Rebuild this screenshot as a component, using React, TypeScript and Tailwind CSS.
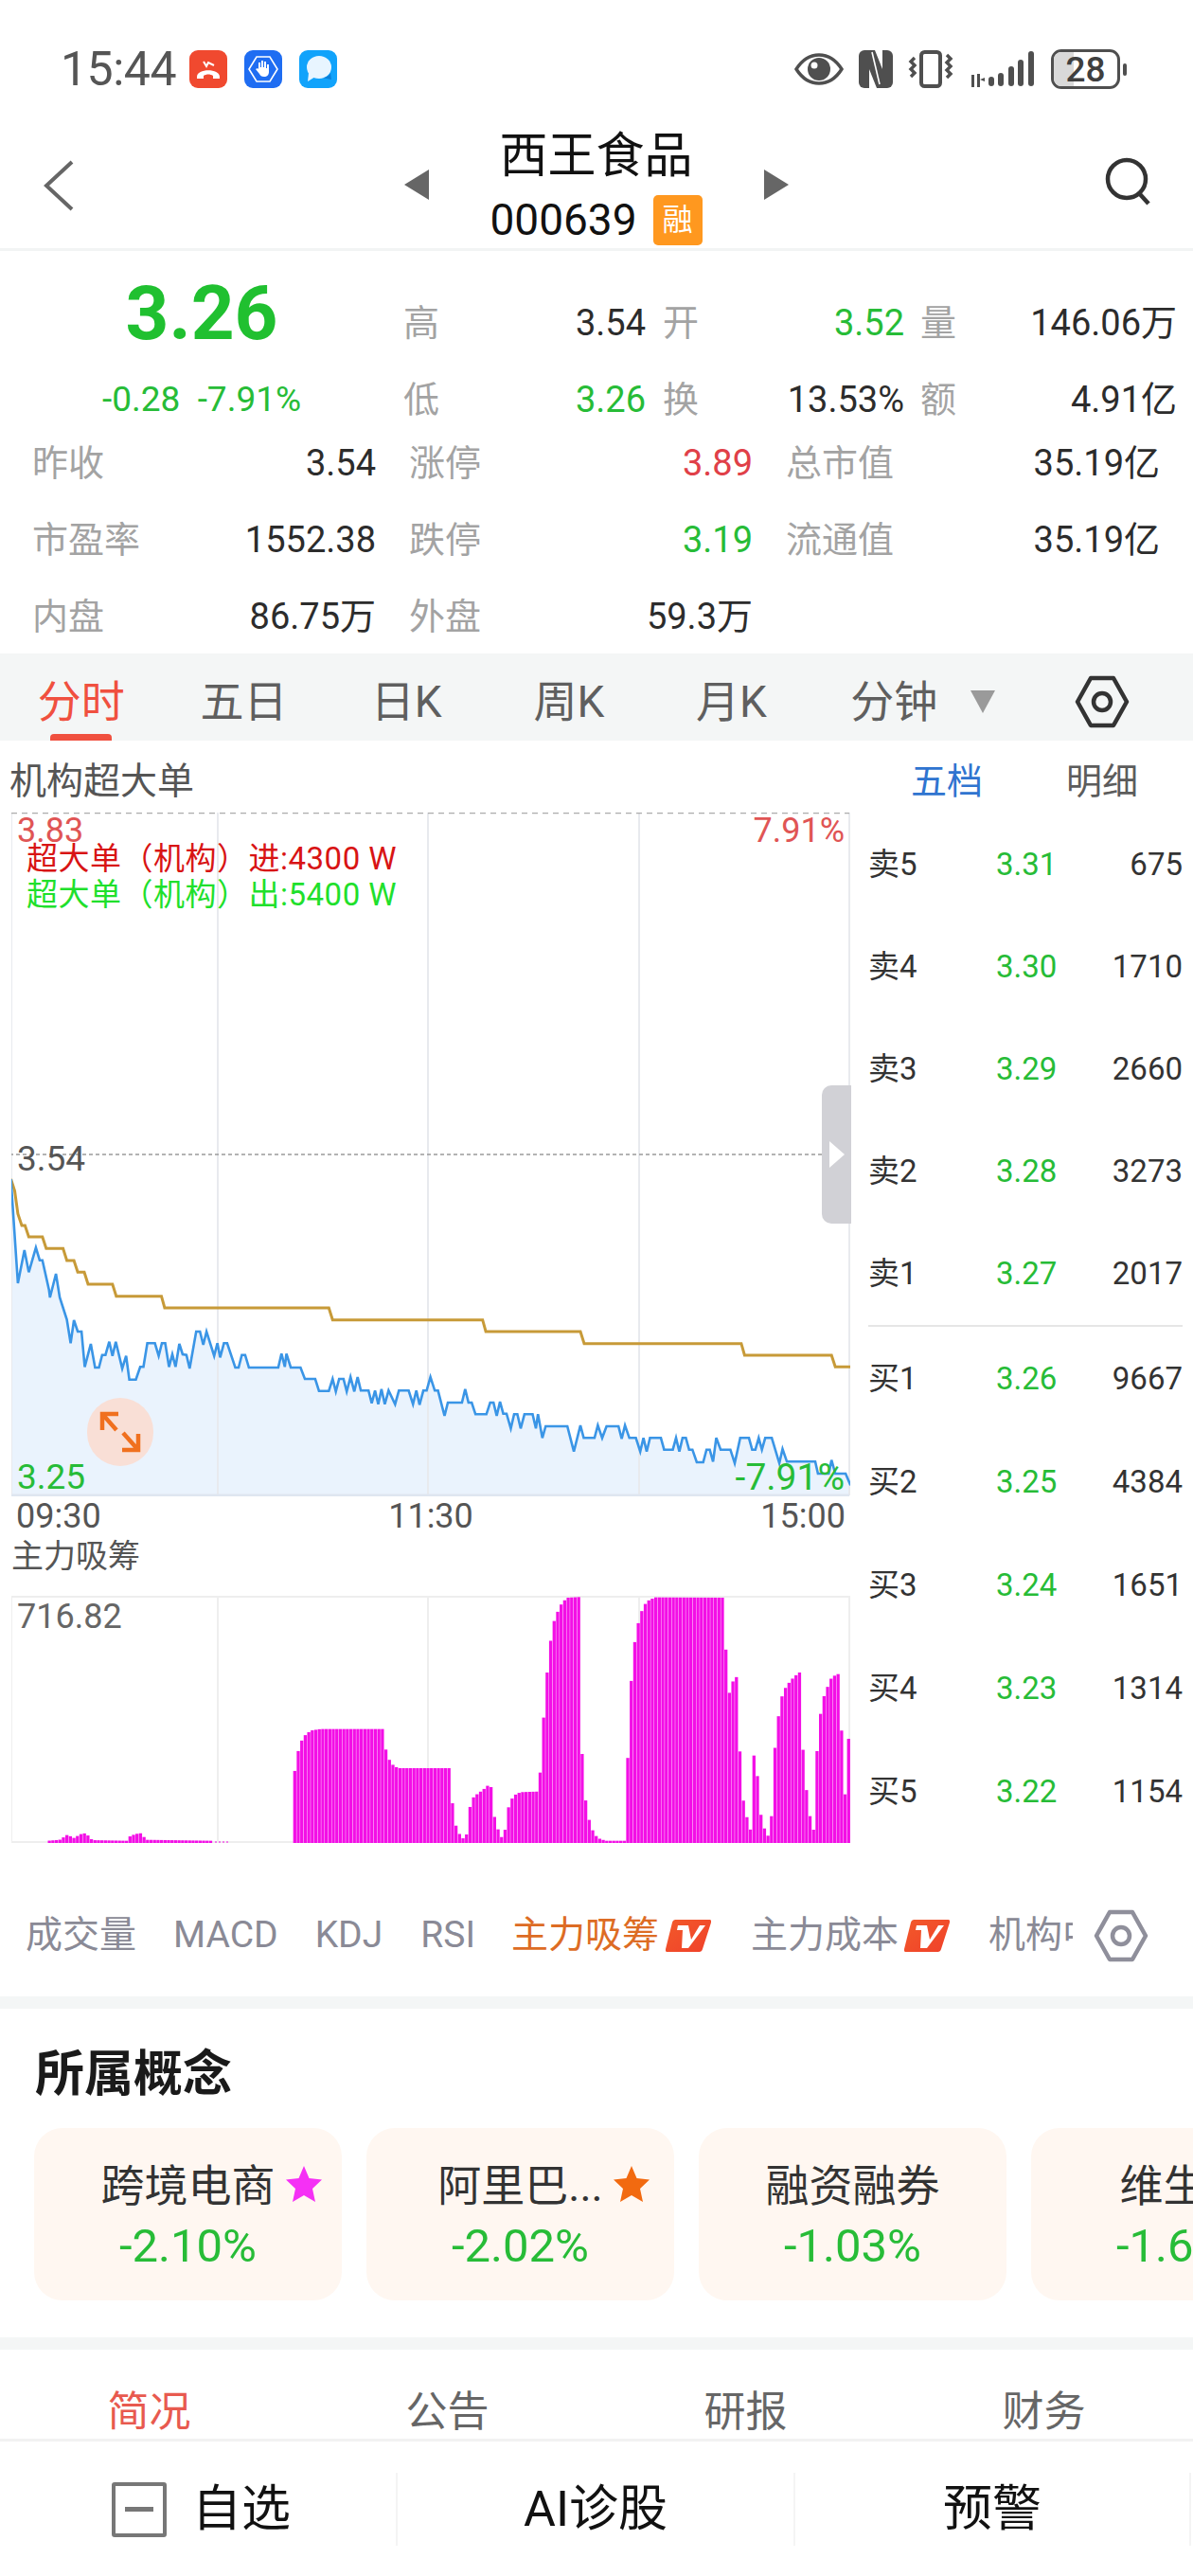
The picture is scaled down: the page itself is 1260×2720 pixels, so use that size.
const GREEN = 'text-[#27bc37]';

// line traces read off the reference, in zoom crop units (1.7422 x, 3 y, origin y 1180)
const bluePts: number[][] = [[20,195],[33,525],[45,420],[53,490],[66,412],[73,452],[78,452],[90,545],[92,570],[103,495],[110,570],[123,640],[130,715],[136,642],[143,678],[150,678],[156,790],[167,717],[175,792],[182,792],[188,752],[194,752],[201,710],[207,755],[213,710],[225,795],[232,755],[238,830],[250,830],[258,790],[264,790],[271,715],[285,715],[292,755],[298,715],[304,715],[311,790],[317,750],[323,790],[330,717],[336,750],[343,752],[349,795],[361,678],[368,678],[374,720],[380,678],[394,755],[400,715],[405,760],[412,715],[418,715],[433,792],[439,792],[445,752],[451,752],[458,792],[512,792],[518,748],[524,790],[527,748],[535,792],[553,792],[561,828],[580,828],[587,866],[605,866],[612,828],[618,868],[624,828],[632,828],[638,868],[645,822],[652,868],[658,822],[664,865],[678,865],[684,905],[690,865],[696,908],[702,860],[708,908],[715,865],[727,908],[734,865],[752,865],[760,908],[766,865],[772,910],[779,865],[785,865],[792,822],[800,865],[806,865],[818,945],[824,903],[850,903],[856,860],[862,903],[868,903],[875,940],[895,940],[902,903],[908,903],[914,945],[920,900],[926,938],[932,938],[940,985],[946,940],[952,940],[958,985],[965,940],[980,940],[986,985],[990,940],[998,1015],[1004,978],[1044,978],[1056,1058],[1068,975],[1074,1015],[1094,1015],[1100,975],[1108,1015],[1116,978],[1138,978],[1144,1018],[1150,975],[1158,1015],[1170,1015],[1178,1058],[1184,1015],[1190,1058],[1196,1015],[1216,1015],[1222,1052],[1238,1052],[1244,1015],[1250,1058],[1256,1015],[1262,1015],[1268,1052],[1274,1052],[1282,1092],[1294,1092],[1300,1052],[1306,1052],[1312,1090],[1318,1015],[1326,1052],[1344,1052],[1352,1095],[1362,1015],[1378,1015],[1384,1052],[1390,1052],[1396,1015],[1402,1052],[1408,1015],[1420,1015],[1434,1095],[1440,1050],[1448,1090],[1500,1090],[1505,1128],[1518,1128],[1525,1128],[1530,1085],[1537,1128],[1556,1128],[1565,1165]];
const goldPts: number[][] = [[20,195],[27,232],[33,305],[40,342],[46,342],[53,378],[78,378],[85,415],[116,415],[123,453],[136,453],[143,490],[155,490],[162,528],[207,528],[214,566],[297,566],[303,603],[605,603],[612,641],[888,641],[894,678],[1068,678],[1075,716],[1364,716],[1370,753],[1530,753],[1537,790],[1565,790]];

// envelope of the magenta bars, zoom crop units (origin y 1600)
const barEnv: number[][] = [[88,1028],[110,1025],[125,1008],[135,1020],[150,1006],[158,1004],[170,1026],[235,1028],[240,1012],[258,1003],[270,1025],[390,1028],[391,1033],[537,1033],[538,872],[544,785],[550,735],[556,708],[564,688],[575,678],[590,674],[705,674],[710,738],[716,770],[725,792],[735,798],[828,798],[833,915],[838,975],[845,1005],[852,1020],[858,1030],[860,950],[866,915],[872,888],[880,878],[890,865],[903,845],[908,938],[915,985],[922,1015],[928,1022],[932,945],[938,910],[945,885],[958,874],[992,872],[996,752],[1002,598],[1008,472],[1014,385],[1020,330],[1028,295],[1035,272],[1045,258],[1065,256],[1068,642],[1074,838],[1080,935],[1088,985],[1095,1010],[1104,1022],[1115,1028],[1152,1028],[1156,705],[1162,512],[1168,400],[1175,335],[1182,295],[1190,270],[1205,257],[1335,258],[1337,645],[1343,548],[1350,518],[1358,505],[1362,768],[1368,900],[1376,965],[1382,998],[1386,758],[1392,758],[1396,895],[1402,965],[1410,1005],[1418,1022],[1424,768],[1432,640],[1438,575],[1445,545],[1455,520],[1470,495],[1475,495],[1478,762],[1486,898],[1492,965],[1498,998],[1503,755],[1509,635],[1516,572],[1523,540],[1530,512],[1540,500],[1546,500],[1550,765],[1556,900],[1560,705],[1567,705]];

const sx = (z: number) => z / 1.7422;
const lineStr = (pts: number[][]) => pts.map(([x, y]) => `${sx(x).toFixed(1)},${(1180 + y / 3).toFixed(1)}`).join(' ');

const envAt = (z: number) => {
  for (let i = 0; i < barEnv.length - 1; i++) {
    const [x0, y0] = barEnv[i];
    const [x1, y1] = barEnv[i + 1];
    if (z >= x0 && z <= x1) return y0 + ((y1 - y0) * (z - x0)) / (x1 - x0 || 1);
  }
  return 1033;
};

const bars: { x: number; y: number }[] = [];
for (let z = 88; z < 1567; z += 6.45) {
  const e = envAt(z + 3);
  if (e < 1032) bars.push({ x: sx(z), y: 1600 + e / 3 });
}

const StatusIcons = () => (
  <div className="flex items-center gap-[18px]">
    <svg width="40" height="40" viewBox="0 0 40 40">
      <rect width="40" height="40" rx="9" fill="#f0492f" />
      <path d="M15 12l3 5 2-4 6 3" fill="none" stroke="#fff" strokeWidth="2" />
      <path d="M8 28c0-9 24-9 24 0v2h-7v-3c-3-2-7-2-10 0v3H8z" fill="#fff" />
    </svg>
    <svg width="40" height="40" viewBox="0 0 40 40">
      <rect width="40" height="40" rx="9" fill="#1f6df2" />
      <path d="M13 7h14l8 13-8 13H13L5 20z" fill="none" stroke="#fff" strokeWidth="1.6" />
      <path d="M15 20v-7h2v5h1v-7h2v7h1v-6h2v7h1v-4h2v8c0 3-2 5-5 5s-4-1-5-3l-4-5 2-1z" fill="#fff" />
    </svg>
    <svg width="40" height="40" viewBox="0 0 40 40">
      <rect width="40" height="40" rx="9" fill="#11a3fb" />
      <ellipse cx="21" cy="18" rx="13" ry="12" fill="#e8f5ff" />
      <path d="M10 24l-1 9 8-5z" fill="#e8f5ff" />
      <path d="M24 29c4 0 8-2 9-5l1 7z" fill="#0a7fd8" />
    </svg>
  </div>
);

const SystemIcons = () => (
  <div className="flex items-center pr-[70px]">
    <svg width="52" height="36" viewBox="0 0 52 36" className="mr-[16px]">
      <path d="M2 18C9 7 17 3 26 3s17 4 24 15c-7 11-15 15-24 15S9 29 2 18z" fill="none" stroke="#4f4f4f" strokeWidth="3.5" />
      <circle cx="26" cy="18" r="12" fill="#4f4f4f" />
      <circle cx="21" cy="14" r="3.5" fill="#fff" />
    </svg>
    <svg width="36" height="40" viewBox="0 0 36 40" className="mr-[16px]">
      <rect width="36" height="40" rx="6" fill="#4f4f4f" />
      <rect x="11" width="14" height="40" fill="#fff" />
      <path d="M11 0h6l8 20v20h-6L11 20z" fill="#4f4f4f" />
      <path d="M14 2l8 34" stroke="#fff" strokeWidth="1.6" />
    </svg>
    <svg width="48" height="40" viewBox="0 0 48 40" className="mr-[16px]">
      <rect x="14" y="2" width="20" height="36" rx="3.5" fill="none" stroke="#4f4f4f" strokeWidth="4" />
      <path d="M7 8l-4 4 4 4-4 4 4 4-4 4M41 5l4 4-4 4 4 4-4 4 4 4-4 4" fill="none" stroke="#4f4f4f" strokeWidth="3.4" />
    </svg>
    <svg width="70" height="40" viewBox="0 0 70 40" className="mr-[17px]">
      <rect x="3" y="26" width="3" height="13" fill="#4f4f4f" />
      <rect x="9" y="25" width="3" height="14" fill="#4f4f4f" />
      <path d="M12 31l5-2v4z" fill="#4f4f4f" />
      <rect x="21" y="28" width="6" height="10" rx="3" fill="#4f4f4f" />
      <rect x="31" y="24" width="6" height="14" rx="3" fill="#4f4f4f" />
      <rect x="42" y="17" width="6" height="21" rx="3" fill="#4f4f4f" />
      <rect x="52" y="10" width="6" height="28" rx="3" fill="#4f4f4f" />
      <rect x="63" y="1" width="6" height="37" rx="3" fill="#4f4f4f" />
    </svg>
    <div className="relative flex h-[42px] w-[73px] items-center justify-center overflow-hidden rounded-[11px] border-[3px] border-[#4f4f4f] text-[37px] font-medium leading-none text-[#3f3f3f]">
      <div className="absolute inset-y-0 left-0 w-[21px] bg-[#d9d9d9]" />
      <span className="relative">28</span>
    </div>
    <div className="ml-[3px] h-[13px] w-[4px] rounded-full bg-[#4f4f4f]" />
  </div>
);

const Hex = ({ color, size = 58 }: { color: string; size?: number }) => (
  <svg width={size} height={size} viewBox="0 0 58 58" fill="none">
    <path d="M17 4h24l14 25-14 25H17L3 29z" stroke={color} strokeWidth="4.5" strokeLinejoin="round" />
    <circle cx="29" cy="29" r="9" stroke={color} strokeWidth="4.5" />
  </svg>
);

const VBadge = () => (
  <svg width="48" height="34" viewBox="0 0 48 34">
    <defs>
      <linearGradient id="vb" x1="0" y1="0" x2="1" y2="1">
        <stop offset="0" stopColor="#f25a2a" />
        <stop offset="1" stopColor="#f0402a" />
      </linearGradient>
    </defs>
    <path d="M11 0h35a2 2 0 0 1 2 3l-9 28a4 4 0 0 1-4 3H2a2 2 0 0 1-2-3L7 3a4 4 0 0 1 4-3z" fill="url(#vb)" />
    <path d="M13 6h11l3 15L36 6h6L24 30h-7l1-19h-6z" fill="#fff" />
  </svg>
);

const Stat = ({ label, value, color, w }: { label: string; value: string; color?: string; w?: string }) => (
  <div className={`flex items-center justify-between ${w ?? ''}`}>
    <span className="text-[#a3a3a3]">{label}</span>
    <span className={color ?? 'text-[#2c2c2c]'}>{value}</span>
  </div>
);

const asks = [
  ['卖5', '3.31', '675'],
  ['卖4', '3.30', '1710'],
  ['卖3', '3.29', '2660'],
  ['卖2', '3.28', '3273'],
  ['卖1', '3.27', '2017'],
];
const bids = [
  ['买1', '3.26', '9667'],
  ['买2', '3.25', '4384'],
  ['买3', '3.24', '1651'],
  ['买4', '3.23', '1314'],
  ['买5', '3.22', '1154'],
];

const BookRow = ({ row, h }: { row: string[]; h: string }) => (
  <div className={`grid grid-cols-[135px_1fr_auto] items-center text-[33px] text-[#333] ${h}`}>
    <span>{row[0]}</span>
    <span className={GREEN}>{row[1]}</span>
    <span>{row[2]}</span>
  </div>
);

const PriceChart = () => (
  <div className="relative h-[722px] w-[886px]">
    <svg width="886" height="722" viewBox="12 858 886 722" className="block">
      <polygon points={`${lineStr(bluePts)} ${sx(1565)},1579 12,1579`} fill="#eaf3fd" />
      {[12, 230, 452, 675, 897].map(x => (
        <line key={x} x1={x} x2={x} y1="858" y2="1579" stroke="#e8eaee" strokeWidth="2" />
      ))}
      <line x1="12" x2="897" y1="858.5" y2="858.5" stroke="#ababab" strokeWidth="1.5" strokeDasharray="6 5" />
      <line x1="10" x2="897" y1="1219" y2="1219" stroke="#9a9a9a" strokeWidth="1.5" strokeDasharray="4 3" />
      <line x1="12" x2="897" y1="1579" y2="1579" stroke="#dfe6f0" strokeWidth="3" />
      <polyline points={lineStr(goldPts)} fill="none" stroke="#c79a38" strokeWidth="3" />
      <polyline points={lineStr(bluePts)} fill="none" stroke="#3a95e6" strokeWidth="2.6" />
    </svg>
    <span className="absolute left-[6px] top-[0px] text-[36px] leading-[38px] text-[#e05555]">3.83</span>
    <span className="absolute right-[6px] top-[0px] text-[36px] leading-[38px] text-[#e05555]">7.91%</span>
    <div className="absolute left-[16px] top-[30px] text-[33px] leading-[38px] tracking-[0.5px]">
      <div className="text-[#d81414]">超大单（机构）进:4300 W</div>
      <div className="text-[#1fe02c]">超大单（机构）出:5400 W</div>
    </div>
    <span className="absolute left-[6px] top-[346px] text-[37px] leading-[40px] text-[#555]">3.54</span>
    <span className={`absolute bottom-[0px] left-[6px] text-[37px] leading-[40px] ${GREEN}`}>3.25</span>
    <span className={`absolute bottom-[0px] right-[6px] text-[39px] leading-[40px] ${GREEN}`}>-7.91%</span>
    <div className="absolute left-[80px] top-[618px] flex h-[72px] w-[70px] items-center justify-center rounded-full bg-[#f9dfd6]">
      <svg width="48" height="48" viewBox="0 0 48 48" fill="none" stroke="#f0701f" strokeWidth="4.5">
        <path d="M5 22V5h17M5 5l15 17M43 26v17H26M43 43L27 25" />
      </svg>
    </div>
    <div className="absolute right-[-1px] top-[288px] flex h-[146px] w-[31px] items-center justify-center rounded-l-[10px] bg-[#d1d1d6]">
      <svg width="16" height="28" viewBox="0 0 16 28">
        <path d="M0 0l16 14L0 28z" fill="#fff" />
      </svg>
    </div>
  </div>
);

const FlowChart = () => (
  <div className="relative h-[262px] w-[886px]">
    <svg width="886" height="262" viewBox="12 1684 886 262" className="block">
      <rect x="12" y="1685" width="885" height="259" fill="none" stroke="#eeeeee" strokeWidth="2" />
      {[230, 452, 675].map(x => (
        <line key={x} x1={x} x2={x} y1="1685" y2="1944" stroke="#eeeeee" strokeWidth="2" />
      ))}
      {bars.map(b => (
        <rect key={b.x} x={b.x} y={b.y} width="3.3" height={1945 - b.y} fill="#f30fe6" />
      ))}
      <path d="M227 1944h15" stroke="#f30fe6" strokeWidth="1" strokeDasharray="2 2" />
    </svg>
    <span className="absolute left-[6px] top-[2px] text-[36px] leading-[40px] text-[#666]">716.82</span>
  </div>
);

const concepts = [
  { name: '跨境电商', pct: '-2.10%', star: '#f530f5' },
  { name: '阿里巴...', pct: '-2.02%', star: '#f26a10' },
  { name: '融资融券', pct: '-1.03%' },
  { name: '维生素', pct: '-1.68%' },
];

const Star = ({ color }: { color: string }) => (
  <svg width="40" height="40" viewBox="0 0 40 40" className="absolute left-full top-[6px] ml-[10px]">
    <path d="M20 1l5.5 13L39 15.5 29 25l3 14-12-7-12 7 3-14L1 15.5 14.5 14z" fill={color} />
  </svg>
);

export default function App() {
  return (
    <div className="h-[2720px] w-[1260px] overflow-hidden bg-white font-[Roboto,'Noto_Sans_CJK_SC',sans-serif]">
      {/* status bar */}
      <div className="flex h-[146px] items-center justify-between pl-[64px]">
        <div className="flex items-center gap-[14px]">
          <span className="text-[50px] leading-none tracking-[-0.5px] text-[#555]">15:44</span>
          <StatusIcons />
        </div>
        <SystemIcons />
      </div>

      {/* header */}
      <div className="flex h-[119px] items-start justify-between border-b-[3px] border-[#f2f4f4]">
        <svg width="34" height="54" viewBox="0 0 34 54" fill="none" stroke="#666" strokeWidth="4" className="ml-[45px] mr-[14px] mt-[23px]">
          <path d="M31 2L4 27l27 25" />
        </svg>
        <div className="-mt-[10px] flex items-center">
          <svg width="26" height="32" viewBox="0 0 26 32" className="mb-[6px] mr-[64px]">
            <path d="M26 0v32L0 16z" fill="#666" />
          </svg>
          <div className="flex w-[226px] flex-col items-center">
            <div className="whitespace-nowrap text-[51px] leading-[58px] text-[#111]">西王食品</div>
            <div className="mt-[10px] flex h-[56px] items-center whitespace-nowrap">
              <span className="text-[46px] leading-none text-[#111]">000639</span>
              <span className="ml-[17px] flex h-[53px] w-[52px] items-center justify-center rounded-[5px] bg-[#ff981f] text-[32px] text-[#fff]">融</span>
            </div>
          </div>
          <svg width="26" height="32" viewBox="0 0 26 32" className="mb-[6px] ml-[64px]">
            <path d="M0 0v32l26-16z" fill="#666" />
          </svg>
        </div>
        <svg width="52" height="52" viewBox="0 0 52 52" fill="none" stroke="#333" strokeWidth="4.5" className="mr-[42px] mt-[20px]">
          <circle cx="24" cy="23" r="20" />
          <path d="M37 38l10 11" />
        </svg>
      </div>

      {/* quote stats */}
      <div className="h-[425px] pt-[51px] text-[38px]">
        <div className="grid grid-cols-[426px_256px_273px_288px] grid-rows-[50px_50px] gap-y-[31px]">
          <div className="flex items-center justify-center">
            <span className="mb-[20px] text-[80px] font-bold leading-none text-[#20c030]">3.26</span>
          </div>
          <Stat label="高" value="3.54" />
          <Stat label="开" value="3.52" color={GREEN} w="ml-[18px]" />
          <Stat label="量" value="146.06万" w="ml-[17px]" />
          <div className={`flex items-center justify-center text-[37px] ${GREEN}`}>-0.28&nbsp;&nbsp;-7.91%</div>
          <Stat label="低" value="3.26" color={GREEN} />
          <Stat label="换" value="13.53%" w="ml-[18px]" />
          <Stat label="额" value="4.91亿" w="ml-[17px]" />
        </div>
        <div className="mt-[17px] grid grid-cols-[363px_363px_395px] grid-rows-[50px_50px_50px] gap-x-[35px] gap-y-[31px] pl-[34px]">
          <Stat label="昨收" value="3.54" />
          <Stat label="涨停" value="3.89" color="text-[#e04048]" />
          <Stat label="总市值" value="35.19亿" />
          <Stat label="市盈率" value="1552.38" />
          <Stat label="跌停" value="3.19" color={GREEN} />
          <Stat label="流通值" value="35.19亿" />
          <Stat label="内盘" value="86.75万" />
          <Stat label="外盘" value="59.3万" />
        </div>
      </div>

      {/* period tabs */}
      <div className="flex h-[92px] items-center bg-[#f4f6f6] text-[46px] text-[#5f5f5f]">
        <div className="grid w-[1030px] grid-cols-6 text-center">
          <div className="relative h-[92px] leading-[102px] text-[#f0503f]">
            分时
            <div className="absolute bottom-0 left-[53px] h-[7px] w-[65px] rounded-t-[4px] bg-[#f0503f]" />
          </div>
          <div className="h-[92px] leading-[102px]">五日</div>
          <div className="h-[92px] leading-[102px]">日K</div>
          <div className="h-[92px] leading-[102px]">周K</div>
          <div className="h-[92px] leading-[102px]">月K</div>
          <div className="h-[92px] leading-[102px]">分钟</div>
        </div>
        <svg width="26" height="28" viewBox="0 0 26 28" className="mt-[6px] -ml-[5px]">
          <path d="M0 4h26L13 28z" fill="#9a9a9a" />
        </svg>
        <div className="ml-[84px] mt-[10px]">
          <Hex color="#333" />
        </div>
      </div>

      {/* chart + order book */}
      <div className="flex h-[1178px]">
        <div className="w-[898px] pl-[12px]">
          <div className="-ml-[2px] flex h-[76px] items-center pt-[10px] text-[39px] text-[#555]">机构超大单</div>
          <PriceChart />
          <div className="flex h-[40px] items-center justify-between pl-[5px] pr-[5px] pt-[2px] text-[36px] text-[#555]">
            <span>09:30</span>
            <span>11:30</span>
            <span>15:00</span>
          </div>
          <div className="flex h-[65px] items-start pt-[3px] text-[34px] leading-[40px] text-[#555]">主力吸筹</div>
          <FlowChart />
        </div>
        <div className="flex-1">
          <div className="flex h-[76px] items-center pt-[10px] text-[38px]">
            <span className="ml-[64px] text-[#2f74d0]">五档</span>
            <span className="ml-[88px] text-[#5c5c5c]">明细</span>
          </div>
          <div className="ml-[19px] mr-[11px] pt-[1px]">
            {asks.map(r => (
              <BookRow key={r[0]} row={r} h="h-[108px]" />
            ))}
            <div className="h-[2px] bg-[#e6e6e6]" />
            {bids.map(r => (
              <BookRow key={r[0]} row={r} h="h-[109px]" />
            ))}
          </div>
        </div>
      </div>

      {/* indicator tabs */}
      <div className="flex h-[148px] items-center pt-[19px] text-[39px] text-[#8a8a96]">
        <div className="flex w-[1133px] shrink-0 items-center overflow-hidden whitespace-nowrap pl-[27px]">
          <span className="mr-[39px]">成交量</span>
          <span className="mr-[39px]">MACD</span>
          <span className="mr-[40px]">KDJ</span>
          <span className="mr-[38px]">RSI</span>
          <span className="text-[#dd6c24]">主力吸筹</span>
          <span className="ml-[7px] mr-[42px] shrink-0"><VBadge /></span>
          <span>主力成本</span>
          <span className="ml-[6px] mr-[41px] shrink-0"><VBadge /></span>
          <span>机构中</span>
        </div>
        <div className="ml-[22px]">
          <Hex color="#8f8f9b" />
        </div>
      </div>
      <div className="h-[13px] bg-[#f4f6f6]" />

      {/* concepts */}
      <div className="h-[347px] overflow-hidden">
        <div className="flex h-[126px] items-center pl-[37px] pt-[14px] text-[52px] font-bold text-[#1a1a1a]">所属概念</div>
        <div className="flex gap-[26px] pl-[36px]">
          {concepts.map(c => (
            <div key={c.name} className="flex h-[182px] w-[325px] shrink-0 flex-col items-center rounded-[30px] bg-[#fff7f1] pt-[33px]">
              <div className="relative flex h-[56px] items-center whitespace-nowrap text-[46px] leading-none text-[#333]">
                {c.name}
                {c.star && <Star color={c.star} />}
              </div>
              <div className={`mt-[8px] text-[49px] leading-[56px] ${GREEN}`}>{c.pct}</div>
            </div>
          ))}
        </div>
      </div>
      <div className="h-[13px] bg-[#f4f6f6]" />

      {/* detail tabs */}
      <div className="grid h-[94px] grid-cols-4 items-center pt-[38px] text-center text-[44px] leading-none text-[#666]">
        <span className="text-[#e85a4f]">简况</span>
        <span>公告</span>
        <span>研报</span>
        <span>财务</span>
      </div>
      <div className="h-[3px] bg-[#f2f2f2]" />

      {/* bottom bar */}
      <div className="flex pt-[33px] text-[52px] leading-none text-[#111]">
        <div className="flex h-[77px] w-[420px] items-center justify-center border-r-2 border-[#f4f4f4] pl-[7px]">
          <div className="mr-[27px] flex h-[58px] w-[58px] items-center justify-center rounded-[3px] border-[4px] border-[#777]">
            <div className="h-[5px] w-[30px] bg-[#777]" />
          </div>
          自选
        </div>
        <div className="flex h-[77px] w-[420px] items-center justify-center border-r-2 border-[#f4f4f4]">AI诊股</div>
        <div className="flex h-[77px] w-[418px] items-center justify-center border-r-2 border-[#f4f4f4]">预警</div>
      </div>
    </div>
  );
}
